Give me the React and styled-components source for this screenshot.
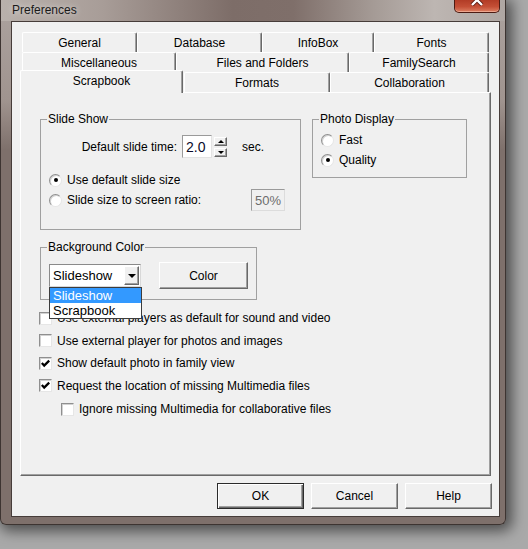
import React from 'react'
import styled, { createGlobalStyle } from 'styled-components'

const GlobalStyle = createGlobalStyle`
  html, body {
    margin: 0;
    padding: 0;
  }
  body {
    background: #a9a9a9;
    font-family: "Liberation Sans", Arial, sans-serif;
    font-size: 12px;
    color: #000;
  }
  * {
    box-sizing: border-box;
  }
`

const Screen = styled.div`
  width: 528px;
  height: 549px;
  overflow: hidden;
  background: #a9a9a9;
`

const Window = styled.div`
  width: 506px;
  height: 525px;
  border: 1px solid #3d3431;
  border-top: none;
  border-radius: 0 0 6px 6px;
  background: linear-gradient(180deg, #aca39f 0px, #a0948f 100px, #7e706b 150px, #7e706b 100%);
  box-shadow: 3px 3px 14px 3px rgba(0, 0, 0, 0.55);
  display: flex;
  flex-direction: column;
`

const TitleBar = styled.div`
  height: 21px;
  flex: none;
  display: flex;
  justify-content: space-between;
  align-items: flex-start;
  padding: 0 5px 0 11px;
  background: linear-gradient(90deg, #b9b1ac 0%, #a89d98 20%, #7d6d68 46%, #7f6f6a 58%, #a59b96 74%, #bdb6b2 86%, #aea6a2 100%);
`

const Title = styled.span`
  padding-top: 3px;
  font-size: 12px;
  color: #1a1a1a;
  text-shadow: 0 0 6px rgba(255, 255, 255, 0.7);
`

const CloseButton = styled.div`
  width: 46px;
  height: 13px;
  border: 1px solid #4c1b12;
  border-top: none;
  border-radius: 0 0 5px 5px;
  background: linear-gradient(180deg, #b23c26 0%, #c44f36 55%, #dc7f62 100%);
  box-shadow: inset 0 -1px 0 rgba(255, 210, 190, 0.5);
  display: flex;
  justify-content: center;
  overflow: hidden;
`

const CloseGlyph = styled.svg`
  margin-top: -6px;
`

const Client = styled.div`
  flex: 1;
  margin: 0 5px 7px 10px;
  border: 1px solid #463c39;
  background: #f0f0f0;
  padding: 10px 7px 0 8px;
  display: flex;
  flex-direction: column;
`

const TabControl = styled.div`
  width: 471px;
`

const TabRow = styled.div`
  display: flex;
  align-items: flex-start;
  height: 20px;
  padding: 0 2px;
`

const Tab = styled.div`
  position: relative;
  z-index: ${p => (p.$active ? 2 : 1)};
  flex: none;
  width: ${p => p.$w}px;
  height: ${p => (p.$active ? 23 : 20)}px;
  margin: ${p => (p.$active ? '-2px 1px 0 -2px' : '0')};
  display: flex;
  align-items: center;
  justify-content: center;
  padding-bottom: ${p => (p.$active ? 2 : 0)}px;
  background: #f0f0f0;
  border-top: 1px solid #fff;
  border-left: 1px solid #fff;
  border-right: 1px solid #696969;
  border-radius: 2px 2px 0 0;
  box-shadow: inset -1px 0 0 #a0a0a0;
`

const Page = styled.div`
  height: 384px;
  border-top: 1px solid #fff;
  border-left: 1px solid #fff;
  border-right: 1px solid #696969;
  border-bottom: 1px solid #696969;
  box-shadow: inset -1px -1px 0 #a0a0a0;
  padding: 19px 0 0 19px;
`

const TopRow = styled.div`
  display: flex;
  align-items: flex-start;
  gap: 11px;
`

const Group = styled.fieldset`
  margin: ${p => p.$top || 0}px 0 0 0;
  min-width: 0;
  width: ${p => p.$w}px;
  height: ${p => p.$h}px;
  padding: ${p => p.$pad};
  border: 1px solid #a0a0a0;
`

const Legend = styled.legend`
  margin-left: -2px;
  padding: 0 1px;
  font-size: 12px;
  line-height: 14px;
`

const TimeRow = styled.div`
  display: flex;
  align-items: center;
  height: 23px;
  margin-bottom: 12px;
`

const TimeLabel = styled.span`
  width: 128px;
  text-align: right;
`

const NumberBox = styled.div`
  width: 30px;
  height: 23px;
  margin-left: 5px;
  padding-left: 3px;
  display: flex;
  align-items: center;
  background: #fff;
  border: 1px solid;
  border-color: #9a9a9a #e3e3e3 #e3e3e3 #9a9a9a;
  font-size: 14px;
  color: #0a0a2a;
`

const Spinner = styled.div`
  display: flex;
  flex-direction: column;
  gap: 2px;
  margin-left: 2px;
`

const SpinButton = styled.div`
  width: 13px;
  height: 9px;
  display: flex;
  align-items: center;
  justify-content: center;
  background: #f0f0f0;
  border: 1px solid;
  border-color: #fff #696969 #696969 #fff;
  box-shadow: inset -1px -1px 0 #a0a0a0;

  &::after {
    content: '';
    border-left: 3px solid transparent;
    border-right: 3px solid transparent;
    ${p => (p.$down ? 'border-top: 3px solid #000;' : 'border-bottom: 3px solid #000;')}
  }
`

const Unit = styled.span`
  margin-left: 15px;
`

const OptionRow = styled.div`
  display: flex;
  align-items: center;
  height: 20px;
`

const Radio = styled.span`
  flex: none;
  width: 13px;
  height: 13px;
  margin-right: 5px;
  border-radius: 50%;
  border: 1px solid;
  border-color: #8f8f8f #e6e6e6 #e6e6e6 #8f8f8f;
  background: #fff;
  box-shadow: inset 1px 1px 0 #d2d2d2;
  display: flex;
  align-items: center;
  justify-content: center;

  &::after {
    content: '';
    width: 4px;
    height: 4px;
    border-radius: 50%;
    background: ${p => (p.$checked ? '#000' : 'transparent')};
  }
`

const RatioBox = styled.div`
  margin-left: auto;
  width: 34px;
  height: 22px;
  padding-right: 3px;
  display: flex;
  align-items: center;
  justify-content: flex-end;
  border: 1px solid;
  border-color: #9a9a9a #dcdcdc #dcdcdc #9a9a9a;
  background: #f0f0f0;
  color: #6d6d6d;
  font-size: 13px;
`

const ColorRow = styled.div`
  display: flex;
  align-items: center;
  gap: 18px;
`

const ComboWrap = styled.div`
  position: relative;
`

const Combo = styled.div`
  width: 92px;
  height: 23px;
  display: flex;
  align-items: center;
  padding: 1px;
  background: #fff;
  border: 1px solid;
  border-color: #8a8a8a #d8d8d8 #d8d8d8 #8a8a8a;
  font-size: 13px;
`

const ComboText = styled.span`
  flex: 1;
  padding-left: 2px;
`

const ComboArrow = styled.span`
  width: 15px;
  height: 19px;
  display: flex;
  align-items: center;
  justify-content: center;
  background: #f0f0f0;
  border: 1px solid;
  border-color: #fff #696969 #696969 #fff;
  box-shadow: inset -1px -1px 0 #a0a0a0;

  &::after {
    content: '';
    border-left: 4px solid transparent;
    border-right: 4px solid transparent;
    border-top: 4px solid #000;
  }
`

const DropList = styled.div`
  position: absolute;
  top: 100%;
  left: 0;
  z-index: 5;
  width: 93px;
  border: 1px solid #3c3c3c;
  background: #fff;
  font-size: 13px;
`

const DropItem = styled.div`
  height: 15px;
  line-height: 15px;
  padding-left: 3px;
  background: ${p => (p.$selected ? '#3399ff' : '#fff')};
  color: ${p => (p.$selected ? '#fff' : '#000')};
`

const Button = styled.div`
  width: ${p => p.$w || 87}px;
  height: ${p => p.$h || 26}px;
  display: flex;
  align-items: center;
  justify-content: center;
  background: #f0f0f0;
  border: 1px solid;
  border-color: ${p => (p.$default ? '#2b2b2b' : '#fff #696969 #696969 #fff')};
  box-shadow: ${p => (p.$default
    ? 'inset 1px 1px 0 #fff, inset -1px -1px 0 #696969, inset -2px -2px 0 #a0a0a0'
    : 'inset -1px -1px 0 #a0a0a0')};
`

const CheckList = styled.div`
  margin: 7px 0 0 -1px;
  display: flex;
  flex-direction: column;
`

const CheckRow = styled.div`
  display: flex;
  align-items: center;
  gap: 5px;
  height: 22.5px;
  padding-left: ${p => (p.$indent ? 22 : 0)}px;
  margin-top: ${p => (p.$indent ? 1 : 0)}px;
`

const Box = styled.span`
  flex: none;
  width: 13px;
  height: 13px;
  display: flex;
  align-items: center;
  justify-content: center;
  background: #fff;
  border: 1px solid;
  border-color: #8f8f8f #e6e6e6 #e6e6e6 #8f8f8f;
  box-shadow: inset 1px 1px 0 #d2d2d2;
`

const ButtonRow = styled.div`
  display: flex;
  justify-content: flex-end;
  gap: 7px;
  margin-top: 7px;
`

const tabRows = [
  [
    { label: 'General', w: 115 },
    { label: 'Database', w: 125 },
    { label: 'InfoBox', w: 112 },
    { label: 'Fonts', w: 115 },
  ],
  [
    { label: 'Miscellaneous', w: 154 },
    { label: 'Files and Folders', w: 173 },
    { label: 'FamilySearch', w: 140 },
  ],
  [
    { label: 'Scrapbook', w: 163, active: true },
    { label: 'Formats', w: 146 },
    { label: 'Collaboration', w: 159 },
  ],
]

const checks = [
  { label: 'Use external players as default for sound and video' },
  { label: 'Use external player for photos and images' },
  { label: 'Show default photo in family view', checked: true },
  { label: 'Request the location of missing Multimedia files', checked: true },
  { label: 'Ignore missing Multimedia for collaborative files', indent: true },
]

const CheckMark = () => (
  <svg width="9" height="9" viewBox="0 0 9 9">
    <polyline points="0.8,4 3.2,6.6 8.2,1.6" fill="none" stroke="#000" strokeWidth="2.3" />
  </svg>
)

export default function App() {
  return (
    <>
      <GlobalStyle />
      <Screen>
        <Window>
          <TitleBar>
            <Title>Preferences</Title>
            <CloseButton>
              <CloseGlyph width="14" height="12" viewBox="0 0 14 12">
                <path d="M2 1 L12 11 M12 1 L2 11" stroke="#5a1a10" strokeWidth="4" />
                <path d="M2 1 L12 11 M12 1 L2 11" stroke="#fff" strokeWidth="2.4" />
              </CloseGlyph>
            </CloseButton>
          </TitleBar>
          <Client>
            <TabControl>
              {tabRows.map((row, i) => (
                <TabRow key={i}>
                  {row.map(t => (
                    <Tab key={t.label} $w={t.w} $active={t.active}>{t.label}</Tab>
                  ))}
                </TabRow>
              ))}
              <Page>
                <TopRow>
                  <Group $w={261} $h={118} $pad="9px 15px 0 8px">
                    <Legend>Slide Show</Legend>
                    <TimeRow>
                      <TimeLabel>Default slide time:</TimeLabel>
                      <NumberBox>2.0</NumberBox>
                      <Spinner>
                        <SpinButton />
                        <SpinButton $down />
                      </Spinner>
                      <Unit>sec.</Unit>
                    </TimeRow>
                    <OptionRow>
                      <Radio $checked />
                      Use default slide size
                    </OptionRow>
                    <OptionRow>
                      <Radio />
                      Slide size to screen ratio:
                      <RatioBox>50%</RatioBox>
                    </OptionRow>
                  </Group>
                  <Group $w={155} $h={66} $pad="4px 8px 0 8px">
                    <Legend>Photo Display</Legend>
                    <OptionRow>
                      <Radio />
                      Fast
                    </OptionRow>
                    <OptionRow>
                      <Radio $checked />
                      Quality
                    </OptionRow>
                  </Group>
                </TopRow>
                <Group $w={217} $h={60} $top={10} $pad="8px 8px 0 8px">
                  <Legend>Background Color</Legend>
                  <ColorRow>
                    <ComboWrap>
                      <Combo>
                        <ComboText>Slideshow</ComboText>
                        <ComboArrow />
                      </Combo>
                      <DropList>
                        <DropItem $selected>Slideshow</DropItem>
                        <DropItem>Scrapbook</DropItem>
                      </DropList>
                    </ComboWrap>
                    <Button $w={89} $h={27}>Color</Button>
                  </ColorRow>
                </Group>
                <CheckList>
                  {checks.map(c => (
                    <CheckRow key={c.label} $indent={c.indent}>
                      <Box>{c.checked && <CheckMark />}</Box>
                      {c.label}
                    </CheckRow>
                  ))}
                </CheckList>
              </Page>
            </TabControl>
            <ButtonRow>
              <Button $default>OK</Button>
              <Button>Cancel</Button>
              <Button>Help</Button>
            </ButtonRow>
          </Client>
        </Window>
      </Screen>
    </>
  )
}
